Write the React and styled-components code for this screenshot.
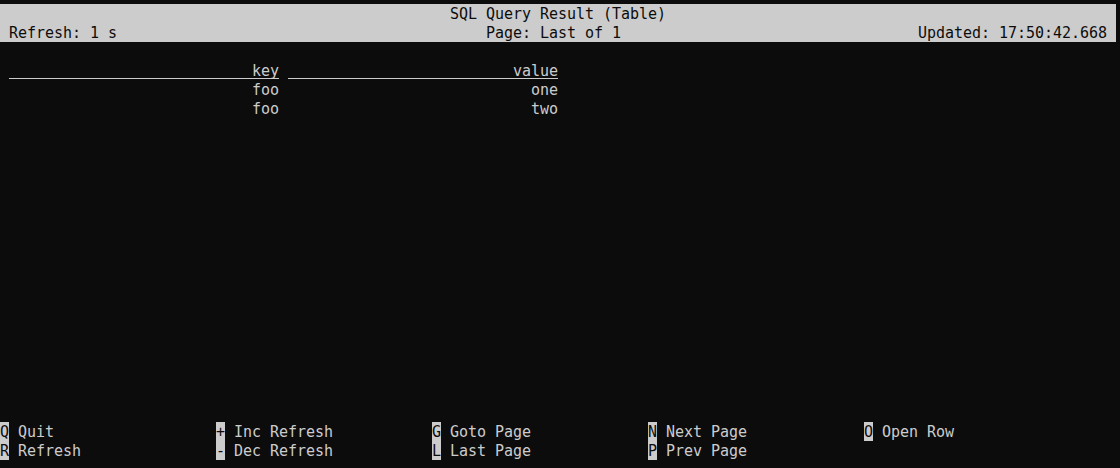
import React from "react";
import styled, { createGlobalStyle, css } from "styled-components";

const GlobalStyle = createGlobalStyle`
  html, body {
    margin: 0;
    padding: 0;
    background: #0c0c0c;
  }
  body {
    font-family: "DejaVu Sans Mono", "Liberation Mono", monospace;
    font-size: 15px;
    letter-spacing: -0.03px;
    line-height: 19px;
    color: #cccccc;
  }
`;

// one terminal line: 19px tall, glyphs nudged 1px down like the reference
const line = css`
  height: 19px;
  box-sizing: border-box;
  padding-top: 1px;
`;

const rows = [
  { key: "foo", value: "one" },
  { key: "foo", value: "two" },
];

const keys = [
  [
    ["Q", "Quit"],
    ["R", "Refresh"],
  ],
  [
    ["+", "Inc Refresh"],
    ["-", "Dec Refresh"],
  ],
  [
    ["G", "Goto Page"],
    ["L", "Last Page"],
  ],
  [
    ["N", "Next Page"],
    ["P", "Prev Page"],
  ],
  [["O", "Open Row"]],
];

const App = () => {
  return (
    <>
      <GlobalStyle />
      <Screen>
        <Header>
          <TitleRow>SQL Query Result (Table)</TitleRow>
          <StatusRow>
            <span>Refresh: 1 s</span>
            <Center>Page: Last of 1</Center>
            <Right>Updated: 17:50:42.668</Right>
          </StatusRow>
        </Header>

        <Table>
          <TableRow>
            <Cell $head>key</Cell>
            <Cell $head>value</Cell>
          </TableRow>
          {rows.map((row, i) => (
            <TableRow key={i}>
              <Cell>{row.key}</Cell>
              <Cell>{row.value}</Cell>
            </TableRow>
          ))}
        </Table>

        <Footer>
          {keys.map((col, i) => (
            <KeyColumn key={i}>
              {col.map(([k, label]) => (
                <KeyItem key={k}>
                  <KeyCap>{k}</KeyCap>
                  <KeyLabel>{label}</KeyLabel>
                </KeyItem>
              ))}
            </KeyColumn>
          ))}
        </Footer>
      </Screen>
    </>
  );
};

const Screen = styled.div`
  width: 1116px;
  height: 456px;
  padding-top: 4px;
  display: flex;
  flex-direction: column;
  white-space: pre;
`;

const Header = styled.div`
  background: #cccccc;
  color: #0c0c0c;
`;

const TitleRow = styled.div`
  ${line}
  text-align: center;
`;

const StatusRow = styled.div`
  ${line}
  display: grid;
  grid-template-columns: 1fr auto 1fr;
  padding-left: 9px;
  padding-right: 9px;
`;

const Center = styled.span`
  padding-right: 9px;
`;

const Right = styled.span`
  text-align: right;
`;

const Table = styled.div`
  margin-top: 19px;
  padding-left: 9px;
  display: flex;
  flex-direction: column;
`;

const TableRow = styled.div`
  ${line}
  display: flex;
  gap: 9px;
`;

const Cell = styled.div`
  width: 270px;
  text-align: right;
  background: ${(p) =>
    p.$head
      ? "linear-gradient(#cccccc, #cccccc) no-repeat 0 16px / 100% 1px"
      : "none"};
`;

const Footer = styled.div`
  margin-top: auto;
  display: grid;
  grid-template-columns: repeat(5, 216px);
  height: 38px;
`;

const KeyColumn = styled.div`
  display: flex;
  flex-direction: column;
`;

const KeyItem = styled.div`
  display: flex;
  gap: 9px;
  height: 19px;
`;

const KeyCap = styled.span`
  ${line}
  width: 9px;
  background: #cccccc;
  color: #0c0c0c;
  text-align: center;
`;

const KeyLabel = styled.span`
  ${line}
`;

export default App;
